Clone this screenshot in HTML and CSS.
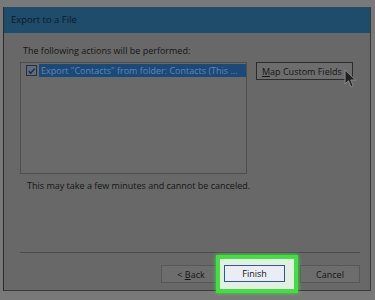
FILE: index.html
```html
<!DOCTYPE html>
<html lang="en">
<head>
    <meta charset="UTF-8">
    <meta name="viewport" content="width=device-width, initial-scale=1.0">
    <title>Export to a File</title>
    <link rel="stylesheet" href="styles.css">
</head>
<body>
<div class="dialog">
    <div class="title-bar">Export to a File</div>
    <div class="dialog-body">
        <p class="intro">The following actions will be performed:</p>
        <div class="actions-row">
            <div class="action-list">
                <div class="action-item">
                    <span class="check">
                        <svg width="10" height="10" viewBox="0 0 10 10"><path d="M2 5 L4 7.5 L8.5 2.5" fill="none" stroke="#1a2a3a" stroke-width="1.4"/></svg>
                    </span>
                    <span class="item-text">Export "Contacts" from folder: Contacts (This ...</span>
                </div>
            </div>
            <div class="map-wrap">
                <button class="btn map-btn" type="button"><u>M</u>ap Custom Fields</button>
                <svg class="cursor" width="13" height="20" viewBox="0 0 13 20">
                    <path d="M1 1 L1 15 L4.5 11.8 L7 18 L9.2 17 L6.8 11 L11.5 11 Z" fill="#222" stroke="#8a8a8a" stroke-width="1"/>
                </svg>
            </div>
        </div>
        <p class="note">This may take a few minutes and cannot be canceled.</p>
        <div class="spacer"></div>
        <div class="separator"></div>
        <div class="buttons">
            <button class="btn back-btn" type="button">&lt; <u>B</u>ack</button>
            <div class="highlight">
                <button class="btn finish-btn" type="button">Finish</button>
            </div>
            <button class="btn cancel-btn" type="button">Cancel</button>
        </div>
    </div>
</div>
</body>
</html>
```

FILE: styles.css
```css
body {
    margin: 0;
    padding: 0;
    background-color: #797979;
    font-family: "Open Sans", "Noto Sans", sans-serif;
    font-size: 9px;
    color: #151515;
    height: 300px;
    overflow: hidden;
}

/* dialog box */
.dialog {
    margin: 7px 4px 0 3px;
    height: 284px;
    background-color: #686868;
    border-left: 1px solid #2a2a2a;
    border-right: 1px solid #3a3a3a;
    border-bottom: 1px solid #3a3a3a;
    display: flex;
    flex-direction: column;
    box-sizing: border-box;
}

.title-bar {
    height: 26px;
    line-height: 26px;
    background-color: #1f4c6a;
    color: #0b1826;
    padding-left: 7px;
    font-size: 9.5px;
    flex-shrink: 0;
}

.dialog-body {
    flex: 1;
    display: flex;
    flex-direction: column;
    padding: 12px 10px 0 16px;
}

.intro {
    margin: 0 0 5px 3px;
    line-height: 12px;
}

.actions-row {
    display: flex;
    align-items: flex-start;
    gap: 9px;
}

.action-list {
    width: 227px;
    height: 112px;
    border: 1px solid #4e4e4e;
    background-color: #6a6a6a;
    box-sizing: border-box;
    padding: 1px 0 0 5px;
}

.action-item {
    display: flex;
    align-items: center;
    height: 13px;
}

.check {
    width: 9px;
    height: 9px;
    border: 1px solid #262f3a;
    background-color: #5d6d80;
    display: flex;
    align-items: center;
    justify-content: center;
    margin-right: 2px;
    flex-shrink: 0;
}

.item-text {
    flex: 1;
    background-color: #1c4a78;
    color: #5f87b4;
    height: 13px;
    line-height: 13px;
    padding-left: 2px;
    white-space: nowrap;
    overflow: hidden;
}

.map-wrap {
    position: relative;
}

.btn {
    font-family: inherit;
    font-size: 9px;
    color: #151515;
    background-color: #6d6d6d;
    border: 1px solid #575757;
    padding: 0;
    margin: 0;
    box-sizing: border-box;
}

.btn u {
    text-decoration: underline;
}

.map-btn {
    width: 97px;
    height: 18px;
    border-color: #2c2c2c;
    text-align: left;
    padding-left: 5px;
}

.cursor {
    position: absolute;
    left: 88px;
    top: 7px;
}

.note {
    margin: 6px 0 0 7px;
    line-height: 12px;
}

.spacer {
    flex: 1;
}

.separator {
    height: 1px;
    background-color: #4b4b4b;
}

.buttons {
    display: flex;
    justify-content: flex-end;
    align-items: center;
    margin-top: 2px;
    margin-bottom: -3px;
}

.back-btn {
    width: 60px;
    height: 18px;
    margin-right: -5px;
}

.highlight {
    position: relative;
    border: 4px solid #3fe03f;
    background-color: #e4eee2;
    padding: 6px 9px 7px 4px;
    box-shadow: 0 0 4px #3fe03f;
}

.finish-btn {
    width: 61px;
    height: 17px;
    background-color: #e9eef5;
    border: 1px solid #2a5c94;
    color: #111;
    display: block;
}

.cancel-btn {
    width: 60px;
    height: 18px;
    margin-left: 2px;
}
```
